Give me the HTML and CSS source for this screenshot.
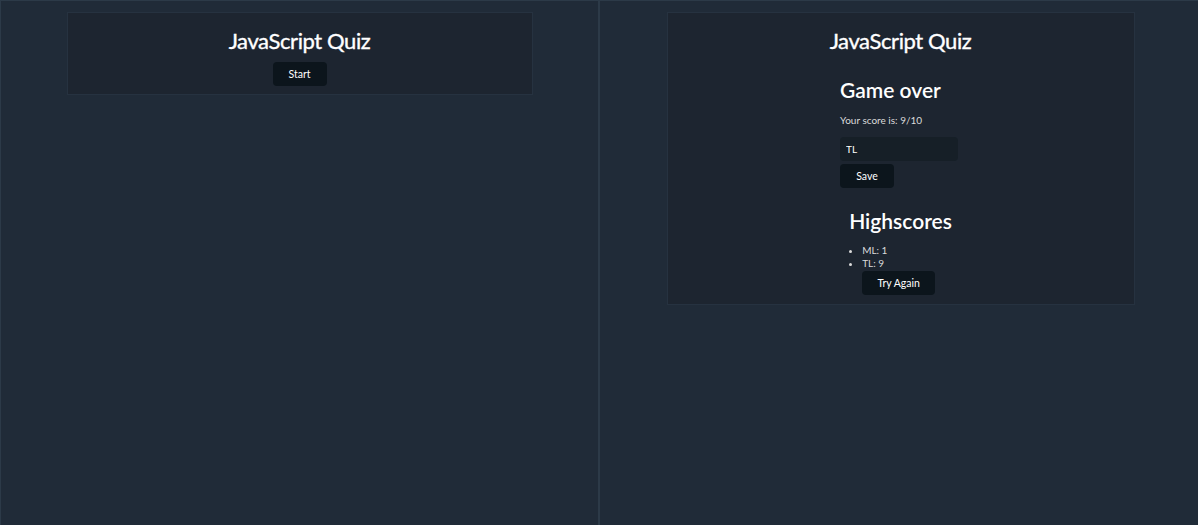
FILE: index.html
```html
<!DOCTYPE html>
<html lang="en">
<head>
<meta charset="utf-8">
<title>JavaScript Quiz</title>
<link rel="stylesheet" href="styles.css">
</head>
<body>
<div class="frame">
  <section class="panel panel-left">
    <div class="card card-start">
      <h1 class="title">JavaScript Quiz</h1>
      <button class="btn btn-start">Start</button>
    </div>
  </section>
  <section class="panel panel-right">
    <div class="card card-end">
      <h1 class="title">JavaScript Quiz</h1>
      <div class="result">
        <h2 class="subtitle">Game over</h2>
        <p class="score">Your score is: 9/10</p>
        <input class="name-input" type="text" value="TL">
        <button class="btn btn-save">Save</button>
      </div>
      <div class="highscores">
        <h2 class="subtitle">Highscores</h2>
        <ul class="score-list">
          <li>ML: 1</li>
          <li>TL: 9</li>
        </ul>
        <button class="btn btn-again">Try Again</button>
      </div>
    </div>
  </section>
</div>
</body>
</html>
```

FILE: styles.css
```css
* { box-sizing: border-box; }
html, body {
  margin: 0;
  padding: 0;
  background: #202b38;
  width: 1198px;
  height: 525px;
  overflow: hidden;
  font-family: "Lato", "Noto Sans", sans-serif;
  color: #dbdbdb;
}
.frame {
  display: flex;
  width: 1198px;
  height: 525px;
  border-top: 1px solid #2c3a48;
  border-left: 1px solid #2c3a48;
}
.panel {
  display: flex;
  flex-direction: column;
  align-items: center;
  padding-top: 11px;
}
.panel-left {
  width: 599px;
  border-right: 2px solid #2c3a48;
}
.panel-right {
  flex: 1;
  padding-left: 3px;
}
.card {
  background: #1d2530;
  border: 1px solid #263240;
  display: flex;
  flex-direction: column;
  align-items: center;
}
.card-start {
  width: 466px;
  height: 83px;
}
.card-end {
  width: 468px;
  height: 293px;
}
.title {
  margin: 15px 0 0;
  font-size: 22px;
  line-height: 26px;
  font-weight: 400;
  letter-spacing: -0.4px;
  color: #ffffff;
  -webkit-text-stroke: 0.35px #ffffff;
}
.btn {
  background: #0c151c;
  color: #ffffff;
  border: none;
  border-radius: 4px;
  font-family: inherit;
  font-size: 10.5px;
  height: 24px;
  padding: 0;
}
.btn-start {
  margin-top: 8px;
  width: 54px;
}
.result {
  width: 121px;
  margin-top: 23px;
  display: flex;
  flex-direction: column;
  align-items: flex-start;
}
.subtitle {
  margin: 0;
  font-size: 21px;
  line-height: 26px;
  font-weight: 600;
  color: #ffffff;
}
.score {
  margin: 10px 0 0;
  font-size: 10px;
  line-height: 14px;
}
.name-input {
  margin-top: 10px;
  width: 118px;
  height: 24px;
  background: #161f27;
  border: none;
  border-radius: 4px;
  color: #ffffff;
  font-family: inherit;
  font-size: 10px;
  padding: 0 6px;
  outline: none;
}
.btn-save {
  margin-top: 3px;
  width: 54px;
}
.highscores {
  margin-top: 20px;
  display: flex;
  flex-direction: column;
  align-items: flex-start;
}
.score-list {
  margin: 10px 0 0;
  padding-left: 13px;
  font-size: 10px;
  line-height: 13px;
}
.btn-again {
  margin-top: 1px;
  margin-left: 13px;
  width: 73px;
}
```
